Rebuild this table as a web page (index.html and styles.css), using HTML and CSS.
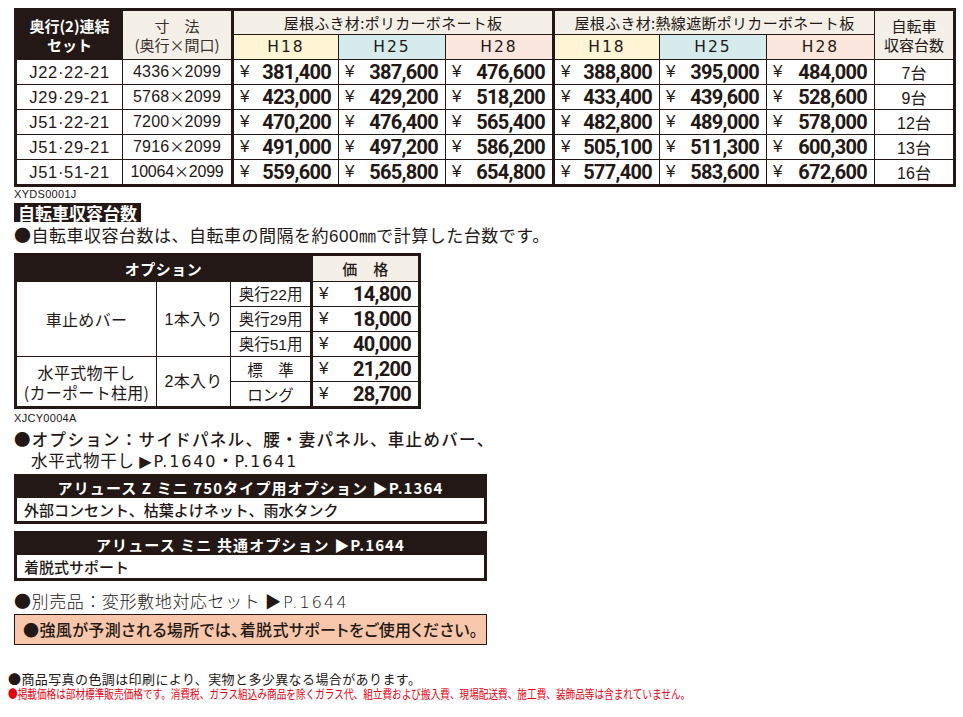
FILE: index.html
```html
<!DOCTYPE html>
<html lang="ja">
<head>
<meta charset="utf-8">
<title>価格表</title>
<link rel="stylesheet" href="styles.css">
</head>
<body>
<div class="page">
  <table class="price">
    <colgroup>
      <col class="c-set"><col class="c-dim">
      <col class="c-a"><col class="c-b"><col class="c-c">
      <col class="c-a2"><col class="c-b"><col class="c-c">
      <col class="c-bike">
    </colgroup>
    <thead>
      <tr class="h1">
        <th rowspan="2" class="dark set-h">奥行(2)連結<br>セット</th>
        <th rowspan="2" class="beige dim-h">寸　法<br>(奥行×間口)</th>
        <th colspan="3" class="beige grp sep">屋根ふき材:ポリカーボネート板</th>
        <th colspan="3" class="beige grp sep">屋根ふき材:熱線遮断ポリカーボネート板</th>
        <th rowspan="2" class="beige bike-h">自転車<br>収容台数</th>
      </tr>
      <tr class="h2">
        <th class="hy sep">H18</th><th class="ht">H25</th><th class="hp">H28</th>
        <th class="hy sep">H18</th><th class="ht">H25</th><th class="hp">H28</th>
      </tr>
    </thead>
    <tbody>
      <tr>
        <td class="model">J22·22-21</td><td class="dim">4336<span class="x">×</span>2099</td>
        <td class="pr sep"><span class="yen">¥</span><b>381,400</b></td>
        <td class="pr"><span class="yen">¥</span><b>387,600</b></td>
        <td class="pr"><span class="yen">¥</span><b>476,600</b></td>
        <td class="pr sep"><span class="yen">¥</span><b>388,800</b></td>
        <td class="pr"><span class="yen">¥</span><b>395,000</b></td>
        <td class="pr"><span class="yen">¥</span><b>484,000</b></td>
        <td class="bike">7台</td>
      </tr>
      <tr>
        <td class="model">J29·29-21</td><td class="dim">5768<span class="x">×</span>2099</td>
        <td class="pr sep"><span class="yen">¥</span><b>423,000</b></td>
        <td class="pr"><span class="yen">¥</span><b>429,200</b></td>
        <td class="pr"><span class="yen">¥</span><b>518,200</b></td>
        <td class="pr sep"><span class="yen">¥</span><b>433,400</b></td>
        <td class="pr"><span class="yen">¥</span><b>439,600</b></td>
        <td class="pr"><span class="yen">¥</span><b>528,600</b></td>
        <td class="bike">9台</td>
      </tr>
      <tr>
        <td class="model">J51·22-21</td><td class="dim">7200<span class="x">×</span>2099</td>
        <td class="pr sep"><span class="yen">¥</span><b>470,200</b></td>
        <td class="pr"><span class="yen">¥</span><b>476,400</b></td>
        <td class="pr"><span class="yen">¥</span><b>565,400</b></td>
        <td class="pr sep"><span class="yen">¥</span><b>482,800</b></td>
        <td class="pr"><span class="yen">¥</span><b>489,000</b></td>
        <td class="pr"><span class="yen">¥</span><b>578,000</b></td>
        <td class="bike">12台</td>
      </tr>
      <tr>
        <td class="model">J51·29-21</td><td class="dim">7916<span class="x">×</span>2099</td>
        <td class="pr sep"><span class="yen">¥</span><b>491,000</b></td>
        <td class="pr"><span class="yen">¥</span><b>497,200</b></td>
        <td class="pr"><span class="yen">¥</span><b>586,200</b></td>
        <td class="pr sep"><span class="yen">¥</span><b>505,100</b></td>
        <td class="pr"><span class="yen">¥</span><b>511,300</b></td>
        <td class="pr"><span class="yen">¥</span><b>600,300</b></td>
        <td class="bike">13台</td>
      </tr>
      <tr>
        <td class="model">J51·51-21</td><td class="dim tight">10064<span class="x">×</span>2099</td>
        <td class="pr sep"><span class="yen">¥</span><b>559,600</b></td>
        <td class="pr"><span class="yen">¥</span><b>565,800</b></td>
        <td class="pr"><span class="yen">¥</span><b>654,800</b></td>
        <td class="pr sep"><span class="yen">¥</span><b>577,400</b></td>
        <td class="pr"><span class="yen">¥</span><b>583,600</b></td>
        <td class="pr"><span class="yen">¥</span><b>672,600</b></td>
        <td class="bike">16台</td>
      </tr>
    </tbody>
  </table>
  <div class="code">XYDS0001J</div>

  <div class="label">自転車収容台数</div>
  <p class="note">●自転車収容台数は、自転車の間隔を約<span class="lat">600</span>㎜で計算した台数です。</p>

  <table class="opt">
    <colgroup>
      <col class="o1"><col class="o2"><col class="o3"><col class="o4">
    </colgroup>
    <tr class="oh">
      <th colspan="3" class="dark">オプション</th>
      <th class="beige sep price-h">価　格</th>
    </tr>
    <tr>
      <td rowspan="3" class="big">車止めバー</td>
      <td rowspan="3" class="big lat">1本入り</td>
      <td class="lat">奥行22用</td>
      <td class="pr sep"><span class="yen">¥</span><b>14,800</b></td>
    </tr>
    <tr>
      <td class="lat">奥行29用</td>
      <td class="pr sep"><span class="yen">¥</span><b>18,000</b></td>
    </tr>
    <tr>
      <td class="lat">奥行51用</td>
      <td class="pr sep"><span class="yen">¥</span><b>40,000</b></td>
    </tr>
    <tr>
      <td rowspan="2" class="big two">水平式物干し<br>(カーポート柱用)</td>
      <td rowspan="2" class="big lat">2本入り</td>
      <td>標　準</td>
      <td class="pr sep"><span class="yen">¥</span><b>21,200</b></td>
    </tr>
    <tr>
      <td>ロング</td>
      <td class="pr sep"><span class="yen">¥</span><b>28,700</b></td>
    </tr>
  </table>
  <div class="code code2">XJCY0004A</div>

  <p class="opt-note">●オプション：サイドパネル、腰・妻パネル、車止めバー、<br><span class="indent">水平式物干し <span class="wide">▶P.1640</span>・<span class="wide">P.1641</span></span></p>

  <div class="box">
    <div class="box-h">アリュース Z ミニ 750タイプ用オプション ▶P.1364</div>
    <div class="box-b">外部コンセント、枯葉よけネット、雨水タンク</div>
  </div>
  <div class="box">
    <div class="box-h">アリュース ミニ 共通オプション ▶P.1644</div>
    <div class="box-b">着脱式サポート</div>
  </div>

  <p class="sold">●別売品：変形敷地対応セット <span class="wide">▶P.1644</span></p>
  <div class="warn">●強風が予測される場所では、着脱式サポートをご使用ください。</div>

  <div class="foot">
    <p class="f1">●商品写真の色調は印刷により、実物と多少異なる場合があります。</p>
    <p class="f2"><span>●掲載価格は部材標準販売価格です。消費税、ガラス組込み商品を除くガラス代、組立費および搬入費、現場配送費、施工費、装飾品等は含まれていません。</span></p>
  </div>
</div>
</body>
</html>
```

FILE: styles.css
```css
* { box-sizing: border-box; }

body {
  margin: 0;
  background: #fff;
  color: #231815;
  font-family: "Noto Sans CJK JP", "Noto Sans", sans-serif;
}

.page {
  width: 963px;
  padding: 8px 0 0 14px;
}

p { margin: 0; }

.lat { font-family: "Liberation Sans", "Noto Sans CJK JP", sans-serif; }
.wide {
  font-family: "DejaVu Sans", "Noto Sans CJK JP", sans-serif;
  font-size: 0.97em;
  letter-spacing: 1.8px;
  line-height: 0;
}

table {
  border-collapse: collapse;
  table-layout: fixed;
}

/* ---------- main price table ---------- */
.price {
  width: 939px;
  border: 3px solid #231815;
}

.price th,
.price td,
.opt th,
.opt td {
  border: 1px solid #231815;
  padding: 0;
  text-align: center;
  white-space: nowrap;
  vertical-align: middle;
}

.c-set { width: 107px; }
.c-dim { width: 110px; }
.c-a { width: 106px; }
.c-a2 { width: 106px; }
.c-b { width: 107px; }
.c-c { width: 108px; }
.c-bike { width: 80px; }

.sep { border-left: 3px solid #231815 !important; }

.dark {
  background: #231815;
  color: #fff;
}
.beige { background: #f4f0e8; }
.hy { background: #fdf5d4; }
.ht { background: #d6ecec; }
.hp { background: #fce7de; }

.h1 { height: 25px; }
.h2 { height: 25px; }
.price tbody tr { height: 25px; }

.price th {
  font-weight: 400;
  font-size: 15px;
  line-height: 19px;
}

.set-h {
  font-weight: 700 !important;
  font-size: 15px;
  line-height: 19px;
}

.dim-h { color: #3a2f2c; }

.grp { letter-spacing: 0.3px; }

.hy, .ht, .hp {
  font-family: "DejaVu Sans", sans-serif;
  font-size: 15.5px !important;
  letter-spacing: 2px;
}

.bike-h { line-height: 19px; }

.model {
  font-family: "Liberation Sans", Arial, sans-serif;
  font-size: 16.5px;
  letter-spacing: 0.7px;
}

.dim {
  font-family: "Liberation Sans", Arial, sans-serif;
  font-size: 16px;
  letter-spacing: 0.2px;
}
.dim.tight { letter-spacing: -0.2px; }

.x {
  font-family: "Noto Sans CJK JP", sans-serif;
  font-size: 15px;
  line-height: 0;
}

.pr {
  text-align: right !important;
  padding: 0 7px 0 6px !important;
}

.yen {
  float: left;
  font-family: "Liberation Sans", Arial, sans-serif;
  font-size: 17px;
  line-height: 24px;
}

.pr b {
  font-family: Roboto, "Liberation Sans", sans-serif;
  font-weight: 700;
  font-size: 20px;
  letter-spacing: -0.7px;
  line-height: 24px;
}

.bike {
  font-size: 16px;
  font-family: "Liberation Sans", "Noto Sans CJK JP", sans-serif;
}

.code {
  font-family: "Liberation Sans", Arial, sans-serif;
  font-size: 11px;
  line-height: 13px;
  margin-top: 1px;
  letter-spacing: 0.3px;
}
.code2 { margin-top: 3px; }

/* ---------- section label ---------- */
.label {
  width: fit-content;
  margin-top: 2px;
  background: #231815;
  color: #fff;
  font-weight: 700;
  font-size: 17px;
  line-height: 19px;
  padding: 0 4px;
}

.note {
  font-size: 17px;
  line-height: 24px;
  margin-top: 1px;
  letter-spacing: 0.5px;
}

.note .lat { letter-spacing: 0.5px; line-height: 0; }

/* ---------- options table ---------- */
.opt {
  width: 404px;
  border: 3px solid #231815;
  margin-top: 6px;
}

.o1 { width: 141px; }
.o2 { width: 74px; }
.o3 { width: 81px; }
.o4 { width: 108px; }

.opt tr { height: 25px; }
.opt .oh { height: 27px; }

.opt th {
  font-size: 15px;
  font-weight: 700;
  letter-spacing: 0.5px;
}

.opt .price-h { font-weight: 500; }

.opt td {
  font-size: 15.5px;
  line-height: 19px;
}

.opt td.big { font-size: 16px; letter-spacing: 0.3px; }
.opt td.two { line-height: 20px; }

/* ---------- option notes ---------- */
.opt-note {
  margin-top: 4px;
  font-size: 16.5px;
  font-weight: 500;
  line-height: 21px;
  letter-spacing: 1.3px;
}

.indent {
  display: inline-block;
  padding-left: 17px;
  font-weight: 400;
  letter-spacing: 0.8px;
}

.box {
  width: 473px;
  border: 3px solid #231815;
  margin-top: 3px;
}
.box + .box { margin-top: 7px; }

.box-h {
  background: #231815;
  color: #fff;
  text-align: center;
  font-weight: 700;
  font-size: 15px;
  line-height: 21px;
  letter-spacing: 1.1px;
}

.box-b {
  font-size: 15px;
  font-weight: 500;
  line-height: 23px;
  padding-left: 7px;
}

.sold {
  margin-top: 8px;
  font-size: 17px;
  line-height: 24px;
  font-weight: 300;
  letter-spacing: 0.6px;
}

.warn {
  width: 473px;
  margin-top: 1px;
  background: #f8c7ab;
  border: 1.5px solid #231815;
  font-size: 16px;
  font-weight: 500;
  line-height: 29px;
  padding-left: 8px;
  letter-spacing: 0.4px;
  font-feature-settings: "palt";
  white-space: nowrap;
}

/* ---------- footer ---------- */
.foot {
  margin: 26px 0 0 -6px;
}

.f1 {
  font-size: 13px;
  line-height: 16px;
  letter-spacing: 0.4px;
}

.f2 {
  color: #e60012;
  font-size: 12px;
  line-height: 14px;
  white-space: nowrap;
}

.f2 span {
  display: inline-block;
  transform: scaleX(0.803);
  transform-origin: left center;
}
```
